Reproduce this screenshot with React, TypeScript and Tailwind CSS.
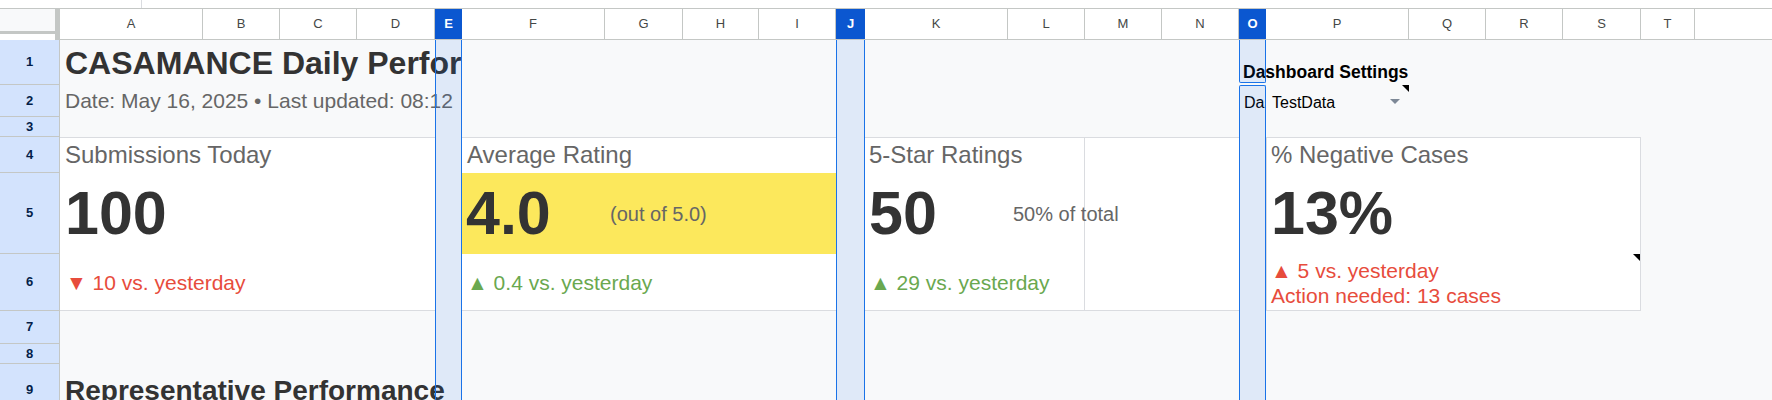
import React from "react";

// column template shared by header and body: row header, A..T, rest
const COLS =
  "grid-cols-[60px_143px_77px_77px_78px_27px_143px_78px_76px_77px_29px_143px_77px_77px_77px_27px_143px_77px_77px_78px_54px_1fr]";

const LETTERS = ["A", "B", "C", "D", "E", "F", "G", "H", "I", "J", "K", "L", "M", "N", "O", "P", "Q", "R", "S", "T", ""];
const SELECTED = ["E", "J", "O"];

const ROW_POS = [
  "row-start-1",
  "row-start-2",
  "row-start-3",
  "row-start-4",
  "row-start-5",
  "row-start-6",
  "row-start-7",
  "row-start-8",
  "row-start-9",
];

function NoteMark() {
  return (
    <span className="absolute top-0 right-0 w-0 h-0 border-l-[7px] border-l-transparent border-t-[7px] border-t-black" />
  );
}

function HeaderRow() {
  return (
    <div className={`grid ${COLS} h-[32px] border-t border-[#c4c7c5] bg-white`}>
      {/* corner with frozen-pane bars */}
      <div className="flex flex-col border-r-[5px] border-[#c4c7c5]">
        <div className="h-[25px] bg-[#f8f9fa] border-b-[3px] border-[#c4c7c5]" />
      </div>
      {LETTERS.map((l, i) =>
        SELECTED.includes(l) ? (
          <div
            key={i}
            className="flex items-center justify-center bg-[#0b57d0] text-white font-bold text-[13px] border-b border-[#c4c7c5]"
          >
            {l}
          </div>
        ) : (
          <div
            key={i}
            className={`flex items-center justify-center text-[13px] text-[#444746] border-b border-[#c4c7c5] ${
              l ? "border-r" : ""
            }`}
          >
            {l}
          </div>
        )
      )}
    </div>
  );
}

export default function App() {
  return (
    <div className="w-[1772px] h-[400px] overflow-hidden bg-white font-['Liberation_Sans',Arial,sans-serif]">
      {/* top strip */}
      <div className="h-[8px] flex">
        <div className="ml-[141px] w-px h-[8px] bg-[#dadce0]" />
      </div>

      <HeaderRow />

      <div className={`grid ${COLS} grid-rows-[45px_32px_20px_36px_81px_57px_33px_20px_53px] bg-[#f8f9fa]`}>
        {/* row numbers */}
        {ROW_POS.map((r, i) => (
          <div
            key={r}
            className={`col-start-1 ${r} flex items-center justify-center bg-[#d3e3fd] border-r border-b border-[#c4c7c5] text-[13px] font-bold text-[#041e49]`}
          >
            {i + 1}
          </div>
        ))}

        {/* card backgrounds */}
        <div className="col-start-2 col-span-4 row-start-4 row-span-3 bg-white border-y border-[#dadce0]" />
        <div className="col-start-7 col-span-4 row-start-4 row-span-3 bg-white border-y border-[#dadce0]" />
        <div className="col-start-7 col-span-4 row-start-5 bg-[#fce85c]" />
        <div className="col-start-12 col-span-4 row-start-4 row-span-3 bg-white border-y border-[#dadce0]" />
        <div className="col-start-12 col-span-2 row-start-4 row-span-3 border-r border-[#dadce0]" />
        <div className="col-start-17 col-span-4 row-start-4 row-span-3 bg-white border border-[#dadce0]" />

        {/* title block */}
        <div className="col-start-2 col-span-5 row-start-1 flex items-center overflow-hidden whitespace-nowrap pl-[5px] text-[32px] font-bold text-[#333333]">
          CASAMANCE Daily Performance Dashboard
        </div>
        <div className="col-start-2 col-span-5 row-start-2 flex items-center overflow-hidden whitespace-nowrap pl-[5px] text-[21px] text-[#666666]">
          Date: May 16, 2025 • Last updated: 08:12
        </div>

        {/* settings */}
        <div className="col-start-16 col-span-3 row-start-1 flex items-end pl-[4px] whitespace-nowrap text-[17.5px] font-bold text-black">
          Dashboard Settings
        </div>
        <div className="col-start-16 row-start-2 flex items-end pb-[2px] overflow-hidden whitespace-nowrap pl-[5px] text-[16px] text-black">
          Dashboard
        </div>
        <div className="col-start-17 row-start-2 relative flex items-end justify-between pb-[2px] pl-[6px] pr-[9px] text-[16px] text-black">
          <span>TestData</span>
          <span className="self-center mt-[2px] w-0 h-0 border-x-[5px] border-x-transparent border-t-[5px] border-t-[#7d8896]" />
          <NoteMark />
        </div>

        {/* card 1 */}
        <div className="col-start-2 col-span-4 row-start-4 flex items-center pl-[5px] text-[24px] text-[#666666] whitespace-nowrap">
          Submissions Today
        </div>
        <div className="col-start-2 col-span-4 row-start-5 flex items-center pl-[5px] text-[61px] font-bold text-[#333333]">
          100
        </div>
        <div className="col-start-2 col-span-4 row-start-6 flex items-center pl-[6px] text-[21px] text-[#e74c3c] whitespace-nowrap">
          ▼ 10 vs. yesterday
        </div>

        {/* card 2 */}
        <div className="col-start-7 col-span-4 row-start-4 flex items-center pl-[5px] text-[24px] text-[#666666] whitespace-nowrap">
          Average Rating
        </div>
        <div className="col-start-7 row-start-5 flex items-center pl-[4px] text-[61px] font-bold text-[#333333]">
          4.0
        </div>
        <div className="col-start-8 col-span-3 row-start-5 flex items-center pl-[5px] text-[20px] text-[#666666] whitespace-nowrap">
          (out of 5.0)
        </div>
        <div className="col-start-7 col-span-4 row-start-6 flex items-center pl-[5px] text-[21px] text-[#6aa84f] whitespace-nowrap">
          ▲ 0.4 vs. yesterday
        </div>

        {/* card 3 */}
        <div className="col-start-12 col-span-4 row-start-4 flex items-center pl-[4px] text-[24px] text-[#666666] whitespace-nowrap">
          5-Star Ratings
        </div>
        <div className="col-start-12 row-start-5 flex items-center pl-[4px] text-[61px] font-bold text-[#333333]">
          50
        </div>
        <div className="col-start-13 col-span-3 row-start-5 flex items-center pl-[5px] text-[20px] text-[#666666] whitespace-nowrap">
          50% of total
        </div>
        <div className="col-start-12 col-span-4 row-start-6 flex items-center pl-[5px] text-[21px] text-[#6aa84f] whitespace-nowrap">
          ▲ 29 vs. yesterday
        </div>

        {/* card 4 */}
        <div className="col-start-17 col-span-4 row-start-4 flex items-center pl-[5px] text-[24px] text-[#666666] whitespace-nowrap">
          % Negative Cases
        </div>
        <div className="col-start-17 col-span-4 row-start-5 flex items-center pl-[5px] text-[61px] font-bold text-[#333333]">
          13%
        </div>
        <div className="col-start-17 col-span-4 row-start-6 flex flex-col justify-center pl-[5px] text-[21px] leading-[25px] text-[#e74c3c] whitespace-nowrap">
          <span>▲ 5 vs. yesterday</span>
          <span>Action needed: 13 cases</span>
        </div>
        <div className="col-start-20 row-start-6 relative">
          <span className="absolute top-0 right-px w-0 h-0 border-l-[7px] border-l-transparent border-t-[7px] border-t-black" />
        </div>

        {/* section heading */}
        <div className="col-start-2 col-span-5 row-start-9 flex items-center overflow-hidden whitespace-nowrap pl-[5px] text-[28px] font-bold text-[#333333]">
          Representative Performance
        </div>

        {/* selected column overlays */}
        <div className="col-start-6 row-start-1 row-span-9 relative z-10 bg-[rgba(14,101,235,0.1)] border-x border-[#1a73e8]" />
        <div className="col-start-11 row-start-1 row-span-9 relative z-10 bg-[rgba(14,101,235,0.1)] border-x border-[#1a73e8]" />
        <div className="col-start-16 row-start-1 mb-[2px] relative z-10 bg-[rgba(14,101,235,0.1)] border-x border-b border-[#1a73e8] rounded-b-[2px]" />
        <div className="col-start-16 row-start-2 row-span-8 relative z-10 bg-[rgba(14,101,235,0.1)] border-x border-t border-[#1a73e8] rounded-t-[2px]" />
      </div>
    </div>
  );
}
